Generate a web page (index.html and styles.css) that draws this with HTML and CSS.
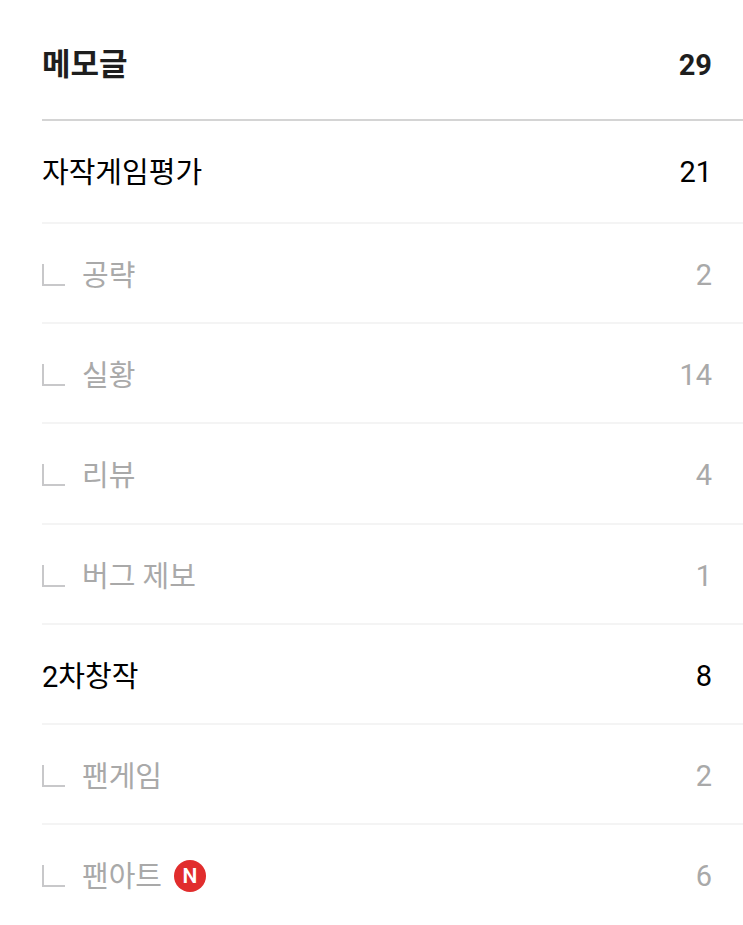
FILE: index.html
```html
<!DOCTYPE html>
<html lang="ko">
<head>
    <meta charset="UTF-8">
    <meta name="viewport" content="width=device-width, initial-scale=1.0">
    <title>메모글</title>
    <link rel="stylesheet" href="styles.css">
</head>
<body>
    <main class="category">
        <h2 class="category-title">
            <span class="name">메모글</span>
            <span class="count">29</span>
        </h2>
        <ul class="category-list">
            <li class="item"><span class="name">자작게임평가</span><span class="count">21</span></li>
            <li class="item sub"><span class="name">공략</span><span class="count">2</span></li>
            <li class="item sub"><span class="name">실황</span><span class="count">14</span></li>
            <li class="item sub"><span class="name">리뷰</span><span class="count">4</span></li>
            <li class="item sub"><span class="name">버그 제보</span><span class="count">1</span></li>
            <li class="item"><span class="name">2차창작</span><span class="count">8</span></li>
            <li class="item sub"><span class="name">팬게임</span><span class="count">2</span></li>
            <li class="item sub">
                <span class="name">팬아트</span>
                <span class="new">N</span>
                <span class="count">6</span>
            </li>
        </ul>
    </main>
</body>
</html>
```

FILE: styles.css
```css
* {
    margin: 0;
    padding: 0;
    box-sizing: border-box;
}

body {
    background-color: #fff;
    color: #000;
    font-family: Roboto, "Noto Sans CJK KR", sans-serif;
}

.category {
    display: flex;
    flex-direction: column;
    min-height: 100vh;
    padding: 8px 0 0 42px;
}

/* Title row */

.category-title {
    display: flex;
    align-items: center;
    height: 113px;
    padding: 2px 31px 0 0;
    border-bottom: 2px solid #d4d4d4;
    color: #1e1e1e;
    font-size: 31px;
    line-height: 44px;
    font-weight: 700;
}

.category-title .count {
    font-size: 29px;
}

.count {
    margin-left: auto;
}

/* Category rows */

.category-list {
    display: flex;
    flex: 1;
    flex-direction: column;
    list-style: none;
}

.item {
    display: flex;
    flex: 1 0 auto;
    align-items: center;
    min-height: 100px;
    padding: 4px 31px 0 0;
    border-bottom: 2px solid #f4f4f4;
    font-size: 29px;
    line-height: 44px;
}

.item .name {
    padding-top: 2px;
}

.item:first-child {
    min-height: 103px;
    padding-bottom: 3px;
}

.item:last-child {
    border-bottom-color: transparent;
}

.sub {
    color: #a9a9a9;
}

.sub::before {
    content: "";
    width: 21px;
    height: 20px;
    margin-right: 17px;
    border-left: 2px solid #c8c8ca;
    border-bottom: 2px solid #c8c8ca;
}

.new {
    width: 32px;
    height: 32px;
    margin-left: 12px;
    border-radius: 50%;
    background-color: #e12d2d;
    color: #fff;
    font-size: 21px;
    font-weight: 600;
    line-height: 32px;
    text-align: center;
}
```
